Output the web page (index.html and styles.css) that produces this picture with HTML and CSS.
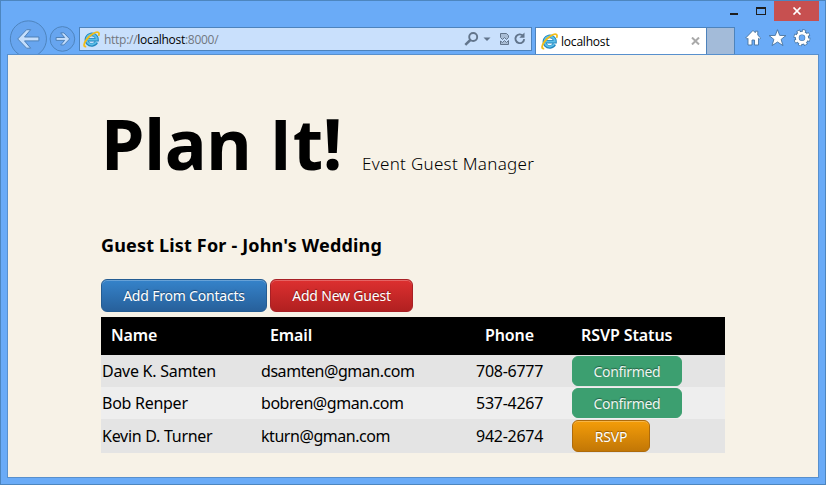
FILE: index.html
```html
<!DOCTYPE html>
<html lang="en">
<head>
<meta charset="utf-8">
<title>localhost</title>
<link rel="stylesheet" href="styles.css">
</head>
<body>
<svg class="defs" width="0" height="0">
  <symbol id="ie" viewBox="0 0 17 17">
    <path d="M13.4 11.2A5.3 5.3 0 1 1 14 8.7H5" fill="none" stroke="#2386bd" stroke-width="3.6"/>
    <path d="M13.2 10.9A5.1 5.1 0 1 1 13.8 8.6H5" fill="none" stroke="#5cbfe9" stroke-width="1.9"/>
    <path d="M3.2 15.4C.2 16.3.4 12.7 3.5 8.6 7 3.8 13.2.1 15.4 1.5c1 .7.7 2.1.2 3.3" fill="none" stroke="#f3bd18" stroke-width="1.8"/>
  </symbol>
</svg>
<div class="window">
  <div class="titlebar">
    <span class="minimize"></span>
    <span class="maximize"></span>
    <span class="close"><svg width="10" height="8" viewBox="0 0 10 8"><path d="M1.5.5l7 7M8.500.5l-7 7" stroke="#fff" stroke-width="1.7"/></svg></span>
  </div>
  <div class="toolbar">
    <svg class="nav" width="70" height="35" viewBox="0 0 70 35">
      <circle cx="21" cy="19.500" r="18.600" fill="#67a5ef" stroke="#4d83bc"/>
      <circle cx="56" cy="19.500" r="12.700" fill="#67a5ef" stroke="#4d83bc"/>
      <path d="M10 19.500L19.100 10h4.200L17 17.500h14.800v4H17l6.300 7.500h-4.200z" fill="#c4defc" stroke="#4b7eb5"/>
      <path d="M63.500 19.500l-6-6.200h-3.300l4.100 4.700h-8.800v3h8.800l-4.100 4.700h3.300z" fill="#c4defc" stroke="#4b7eb5"/>
    </svg>
    <div class="address">
      <svg class="ie" width="17" height="17"><use href="#ie"/></svg>
      <span class="url">http://<b>localhost</b>:8000/</span>
      <svg class="tools" width="62" height="16" viewBox="0 0 62 16" fill="none" stroke="#62758c">
        <circle cx="9.200" cy="6" r="4" stroke-width="1.900"/><path d="M6.300 9L1.300 13.800" stroke-width="2.500"/>
        <path d="M19.500 6.500h7L23 10z" fill="#62758c" stroke="none"/>
        <path d="M36.500 6.500v-4h6l2 2v2l-2 2-2-2-2 2zM36.500 10v3.500h8V9.500l-2 2-2-2-2 2z" fill="#a9bdd5"/>
        <path d="M59 4.700A4.400 4.400 0 1 0 60.200 8.200" stroke-width="1.900"/><path d="M60.500 1.500v5.200h-5.200z" fill="#62758c" stroke="none"/>
      </svg>
    </div>
    <div class="tab">
      <svg class="ie" width="17" height="17"><use href="#ie"/></svg>
      <span class="tab-title">localhost</span>
      <svg class="tab-close" width="9" height="8" viewBox="0 0 9 8"><path d="M1 .5l7 7M8 .5l-7 7" stroke="#a9a9a9" stroke-width="2"/></svg>
    </div>
    <div class="new-tab"></div>
    <svg class="actions" width="66" height="18" viewBox="0 0 66 18" fill="#fff" stroke="#47749f" stroke-width=".9">
      <path d="M.7 9L8 1.4l2.300 2.300V2.200h2.500v4L15.700 9l-1.200 1.200-1-.9V16h-4v-5H7v5H3V9.300l-1 .9z"/>
      <path d="M32.500 .7l2.200 5.700 6.200.2-4.800 3.800 1.900 6.200-5.500-3.600-5.500 3.600 1.900-6.200-4.800-3.800 6.200-.2z"/>
      <g fill="none" transform="translate(57 8.800)">
        <circle r="4.900" stroke="#47749f" stroke-width="4.400"/>
        <circle r="6.700" stroke="#47749f" stroke-width="3.500" stroke-dasharray="3.500 1.762"/>
        <circle r="4.700" stroke="#fff" stroke-width="2.900"/>
        <circle r="6.600" stroke="#fff" stroke-width="2.300" stroke-dasharray="2.200 2.984" stroke-dashoffset="-.6"/>
      </g>
    </svg>
  </div>
  <main class="page">
    <header class="masthead">
      <h1>Plan <span class="cap">I</span>t!</h1>
      <span class="tagline">Event Guest Manager</span>
    </header>
    <h2>Guest List For - John's Wedding</h2>
    <div class="buttons">
      <button class="btn blue"><span>Add From Contacts</span></button>
      <button class="btn red"><span>Add New Guest</span></button>
    </div>
    <table>
      <colgroup><col class="c-name"><col class="c-email"><col class="c-phone"><col class="c-status"></colgroup>
      <thead>
        <tr><th>Name</th><th>Email</th><th>Phone</th><th>RSVP Status</th></tr>
      </thead>
      <tbody>
        <tr><td>Dave K. Samten</td><td class="email">dsamten@gman.com</td><td>708-6777</td><td><span class="btn green"><span>Confirmed</span></span></td></tr>
        <tr><td>Bob Renper</td><td class="email">bobren@gman.com</td><td>537-4267</td><td><span class="btn green"><span>Confirmed</span></span></td></tr>
        <tr><td>Kevin D. Turner</td><td class="email">kturn@gman.com</td><td>942-2674</td><td><button class="btn orange"><span>RSVP</span></button></td></tr>
      </tbody>
    </table>
  </main>
</div>
</body>
</html>
```
FILE: styles.css
```css
* { box-sizing: border-box; }
body { margin: 0; font-family: "Noto Sans", sans-serif; color: #000; }
svg { display: block; flex: none; }
.defs { position: absolute; }
.window {
  width: 826px; height: 485px; padding: 0 6px 6px 6px;
  background: #6aabf7; border: 1px solid #4d86bf;
  display: flex; flex-direction: column;
}
.titlebar { height: 20px; display: flex; justify-content: flex-end; flex: none; }
.minimize { width: 8px; height: 2px; background: #1e1e1e; margin: 12px 18px 0 0; }
.maximize { width: 10px; height: 8px; border: 1px solid #1e1e1e; border-top-width: 2px; margin: 6px 8px 0 0; }
.close { width: 45px; height: 20px; background: #c75050; display: flex; align-items: center; justify-content: center; }
.toolbar { height: 33px; display: flex; align-items: flex-start; flex: none; }
.nav { margin: -1px 2px 0 0; height: 34px; width: 70px; }
.address {
  width: 453px; height: 24px; margin: 6px 3px 0 0; padding: 0 5px 0 3px;
  border: 1px solid #4d83bc; background: #c9e0fc; display: flex; align-items: center;
}
.url { font: 12px "Open Sans", sans-serif; color: #71777f; margin-left: 4px; letter-spacing: -.28px; }
.url b { font-weight: 400; color: #000; }
.tools { margin-left: auto; }
.tab {
  width: 172px; height: 27px; margin-top: 6px; padding: 0 6px 0 5px;
  border: 1px solid #4d83bc; border-bottom: 0; background: #fff; display: flex; align-items: center;
}
.tab-title { font: 12px "Open Sans", sans-serif; margin-left: 3px; letter-spacing: -.2px; }
.tab-close { margin-left: auto; }
.new-tab { width: 28px; height: 27px; margin: 6px 10px 0 0; background: #a3bbd9; border: 1px solid #4d83bc; border-left: 0; border-bottom: 0; }
.actions { margin-top: 8px; }
.page {
  flex: 1; background: #f7f2e7; border: 1px solid #5890cd; padding: 0 0 0 93px;
}
.masthead { height: 141px; display: flex; align-items: baseline; padding-top: 38px; }
h1 { margin: 0; font-size: 70px; line-height: 100px; font-weight: 700; width: 261px; white-space: nowrap; letter-spacing: -.3px; }
.cap { font-family: Roboto, sans-serif; margin: 0 2px 0 1px; }
.tagline { font-size: 17px; font-weight: 300; white-space: nowrap; letter-spacing: .3px; }
h2 { margin: 36px 0 0; font-size: 18px; line-height: 26px; height: 26px; white-space: nowrap; letter-spacing: .17px; }
.buttons { display: flex; gap: 3px; margin-top: 21px; height: 33px; }
.btn {
  display: flex; align-items: center; justify-content: center; height: 33px; padding: 0;
  border: 1px solid; border-radius: 6px; color: #fff; font: 14px "Noto Sans", sans-serif; white-space: nowrap;
  letter-spacing: -.2px;
  text-shadow: 0 -1px 1px rgba(0,0,0,.4); box-shadow: inset 0 1px 0 rgba(255,255,255,.25);
}
.blue { width: 166px; background: linear-gradient(#3583ca, #27609b); border-color: #245c92; }
.red { width: 143px; background: linear-gradient(#dd3030, #b12020); border-color: #a82025; }
.green { width: 110px; height: 30px; background: #3c9f70; border-color: #3c9f70; box-shadow: none; color: #eef6f1; letter-spacing: -.33px; }
.orange { width: 78px; height: 32px; background: linear-gradient(#f49d09, #c27706); border-color: #ae6b0b; }
table { table-layout: fixed; width: 624px; border-collapse: collapse; margin-top: 5px; font-size: 16px; line-height: 22px; }
.c-name { width: 159px; }
.c-email { width: 215px; }
.c-phone { width: 96px; }
th { height: 38px; padding: 0 0 2px 10px; background: #000; color: #fff; text-align: left; font-weight: 600; white-space: nowrap; letter-spacing: -.1px; }
td { height: 32px; padding: 0 1px; white-space: nowrap; letter-spacing: -.27px; }
.email { letter-spacing: -.45px; }
tbody tr { background: #eee; }
tbody tr:nth-child(odd) { background: #e4e4e4; }
tbody tr:last-child td { height: 34px; }
```
